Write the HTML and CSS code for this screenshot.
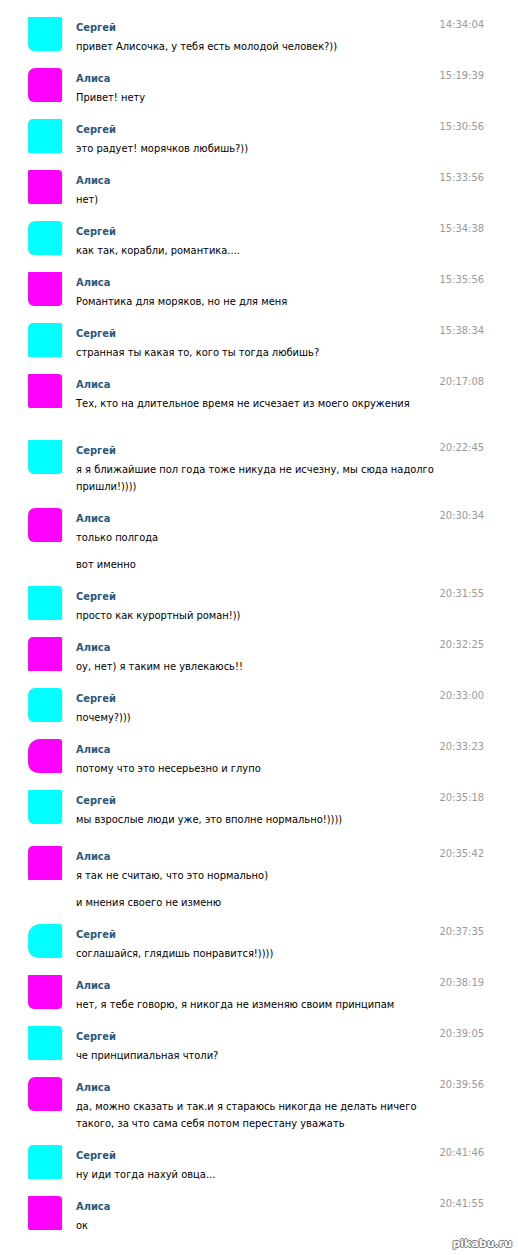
FILE: index.html
```html
<!DOCTYPE html>
<html lang="ru">
<head>
    <meta charset="UTF-8">
    <title>Сообщения</title>
    <link rel="stylesheet" href="styles.css">
</head>
<body>
    <div class="log">
        <div class="row">
            <div class="avatar cyan a1"></div>
            <div class="body">
                <div class="head"><span class="name">Сергей</span><span class="time">14:34:04</span></div>
                <div class="text">привет Алисочка, у тебя есть молодой человек?))</div>
            </div>
        </div>
        <div class="row">
            <div class="avatar pink a2"></div>
            <div class="body">
                <div class="head"><span class="name">Алиса</span><span class="time">15:19:39</span></div>
                <div class="text">Привет! нету</div>
            </div>
        </div>
        <div class="row">
            <div class="avatar cyan a3"></div>
            <div class="body">
                <div class="head"><span class="name">Сергей</span><span class="time">15:30:56</span></div>
                <div class="text">это радует! морячков любишь?))</div>
            </div>
        </div>
        <div class="row">
            <div class="avatar pink a4"></div>
            <div class="body">
                <div class="head"><span class="name">Алиса</span><span class="time">15:33:56</span></div>
                <div class="text">нет)</div>
            </div>
        </div>
        <div class="row">
            <div class="avatar cyan a2"></div>
            <div class="body">
                <div class="head"><span class="name">Сергей</span><span class="time">15:34:38</span></div>
                <div class="text">как так, корабли, романтика....</div>
            </div>
        </div>
        <div class="row">
            <div class="avatar pink a1"></div>
            <div class="body">
                <div class="head"><span class="name">Алиса</span><span class="time">15:35:56</span></div>
                <div class="text">Романтика для моряков, но не для меня</div>
            </div>
        </div>
        <div class="row">
            <div class="avatar cyan a3"></div>
            <div class="body">
                <div class="head"><span class="name">Сергей</span><span class="time">15:38:34</span></div>
                <div class="text">странная ты какая то, кого ты тогда любишь?</div>
            </div>
        </div>
        <div class="row">
            <div class="avatar pink a4"></div>
            <div class="body">
                <div class="head"><span class="name">Алиса</span><span class="time">20:17:08</span></div>
                <div class="text">Тех, кто на длительное время не исчезает из моего окружения</div>
            </div>
        </div>
        <div class="row gap-lg">
            <div class="avatar cyan a1"></div>
            <div class="body">
                <div class="head"><span class="name">Сергей</span><span class="time">20:22:45</span></div>
                <div class="text">я я ближайшие пол года тоже никуда не исчезну, мы сюда надолго пришли!))))</div>
            </div>
        </div>
        <div class="row">
            <div class="avatar pink a2"></div>
            <div class="body">
                <div class="head"><span class="name">Алиса</span><span class="time">20:30:34</span></div>
                <div class="text">только полгода</div>
                <div class="text more">вот именно</div>
            </div>
        </div>
        <div class="row">
            <div class="avatar cyan a4"></div>
            <div class="body">
                <div class="head"><span class="name">Сергей</span><span class="time">20:31:55</span></div>
                <div class="text">просто как курортный роман!))</div>
            </div>
        </div>
        <div class="row">
            <div class="avatar pink a3"></div>
            <div class="body">
                <div class="head"><span class="name">Алиса</span><span class="time">20:32:25</span></div>
                <div class="text">оу, нет) я таким не увлекаюсь!!</div>
            </div>
        </div>
        <div class="row">
            <div class="avatar cyan a2"></div>
            <div class="body">
                <div class="head"><span class="name">Сергей</span><span class="time">20:33:00</span></div>
                <div class="text">почему?)))</div>
            </div>
        </div>
        <div class="row">
            <div class="avatar pink a5"></div>
            <div class="body">
                <div class="head"><span class="name">Алиса</span><span class="time">20:33:23</span></div>
                <div class="text">потому что это несерьезно и глупо</div>
            </div>
        </div>
        <div class="row">
            <div class="avatar cyan a1"></div>
            <div class="body">
                <div class="head"><span class="name">Сергей</span><span class="time">20:35:18</span></div>
                <div class="text">мы взрослые люди уже, это вполне нормально!))))</div>
            </div>
        </div>
        <div class="row gap-sm">
            <div class="avatar pink a3"></div>
            <div class="body">
                <div class="head"><span class="name">Алиса</span><span class="time">20:35:42</span></div>
                <div class="text">я так не считаю, что это нормально)</div>
                <div class="text more">и мнения своего не изменю</div>
            </div>
        </div>
        <div class="row">
            <div class="avatar cyan a5"></div>
            <div class="body">
                <div class="head"><span class="name">Сергей</span><span class="time">20:37:35</span></div>
                <div class="text">соглашайся, глядишь понравится!))))</div>
            </div>
        </div>
        <div class="row">
            <div class="avatar pink a1"></div>
            <div class="body">
                <div class="head"><span class="name">Алиса</span><span class="time">20:38:19</span></div>
                <div class="text">нет, я тебе говорю, я никогда не изменяю своим принципам</div>
            </div>
        </div>
        <div class="row">
            <div class="avatar cyan a4"></div>
            <div class="body">
                <div class="head"><span class="name">Сергей</span><span class="time">20:39:05</span></div>
                <div class="text">че принципиальная чтоли?</div>
            </div>
        </div>
        <div class="row">
            <div class="avatar pink a2"></div>
            <div class="body">
                <div class="head"><span class="name">Алиса</span><span class="time">20:39:56</span></div>
                <div class="text">да, можно сказать и так.и я стараюсь никогда не делать ничего такого, за что сама себя потом перестану уважать</div>
            </div>
        </div>
        <div class="row">
            <div class="avatar cyan a3"></div>
            <div class="body">
                <div class="head"><span class="name">Сергей</span><span class="time">20:41:46</span></div>
                <div class="text">ну иди тогда нахуй овца...</div>
            </div>
        </div>
        <div class="row">
            <div class="avatar pink a4"></div>
            <div class="body">
                <div class="head"><span class="name">Алиса</span><span class="time">20:41:55</span></div>
                <div class="text">ок</div>
            </div>
        </div>
    </div>
    <div class="mark">pikabu.ru</div>
</body>
</html>
```

FILE: styles.css
```css
body {
    margin: 0;
    background: #fff;
    font-family: "DejaVu Sans Condensed", "DejaVu Sans", sans-serif;
    font-size: 11px;
    color: #000;
}
.log {
    padding: 17px 34px 0 28px;
}
.row {
    display: flex;
    padding-bottom: 13px;
}
.row.gap-lg {
    margin-top: 15px;
}
.row.gap-sm {
    margin-top: 5px;
}
.avatar {
    width: 34px;
    height: 34px;
    flex-shrink: 0;
}
.avatar.cyan {
    background: #00ffff;
}
.avatar.pink {
    background: #ff00ff;
}
.a1 { border-radius: 1px 1px 4px 6px; }
.a2 { border-radius: 7px 4px 2px 6px; }
.a3 { border-radius: 5px 1px 1px 1px; }
.a4 { border-radius: 1px 4px 1px 2px; }
.a5 { border-radius: 12px 3px 1px 10px; }
.body {
    flex: 1;
    margin-left: 14px;
    padding-top: 2px;
}
.head {
    display: flex;
    justify-content: space-between;
    line-height: 17px;
}
.name {
    font-weight: bold;
    color: #2b587a;
}
.time {
    color: #999;
    margin-top: -3px;
}
.text {
    margin-top: 2px;
    line-height: 17px;
    max-width: 362px;
}
.text.more {
    margin-top: 10px;
}
.mark {
    position: absolute;
    right: 6px;
    top: 1237px;
    font-family: "DejaVu Sans", sans-serif;
    font-size: 11px;
    font-weight: bold;
    color: #fff;
    text-shadow: 1px 0 #777, -1px 0 #777, 0 1px #777, 0 -1px #777;
}
```
